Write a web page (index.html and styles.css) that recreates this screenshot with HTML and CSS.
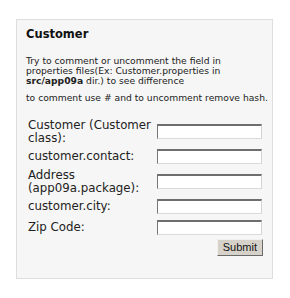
FILE: index.html
```html
<!DOCTYPE html>
<html lang="en">
<head>
    <meta charset="UTF-8">
    <title>Customer</title>
    <link rel="stylesheet" href="styles.css">
</head>
<body>
    <div class="box">
        <h2>Customer</h2>
        <p class="note">Try to comment or uncomment the field in<br>
        properties files(Ex: Customer.properties in<br>
        <b>src/app09a</b> dir.) to see difference</p>
        <p class="note second">to comment use # and to uncomment remove hash.</p>

        <form id="customerForm">
            <table class="fields">
                <tr>
                    <td class="label"><label for="name">Customer (Customer class):</label></td>
                    <td><input type="text" id="name" name="name"></td>
                </tr>
                <tr>
                    <td class="label"><label for="contact">customer.contact:</label></td>
                    <td><input type="text" id="contact" name="contact"></td>
                </tr>
                <tr>
                    <td class="label"><label for="address">Address (app09a.package):</label></td>
                    <td><input type="text" id="address" name="address"></td>
                </tr>
                <tr>
                    <td class="label"><label for="city">customer.city:</label></td>
                    <td><input type="text" id="city" name="city"></td>
                </tr>
                <tr>
                    <td class="label"><label for="zip">Zip Code:</label></td>
                    <td><input type="text" id="zip" name="zip"></td>
                </tr>
                <tr>
                    <td></td>
                    <td class="actions"><button type="submit">Submit</button></td>
                </tr>
            </table>
        </form>
    </div>
</body>
</html>
```

FILE: styles.css
```css
body {
    margin: 0;
    background: #fff;
    font-family: "DejaVu Sans", Verdana, sans-serif;
    color: #222;
}
.box {
    margin: 19px 0 0 16px;
    width: 246px;
    padding: 7px 0 19px 9px;
    background: #f6f6f6;
    border: 1px solid #dedede;
}
h2 {
    margin: 0;
    font-size: 11.5px;
    line-height: 14px;
    color: #111;
}
.note {
    margin: 15px 0 0 0;
    font-size: 9.2px;
    line-height: 10px;
}
.note.second {
    margin-top: 7px;
}
.fields {
    margin: 13px 0 0 -1px;
    border-spacing: 2px;
}
.fields td {
    padding: 1px;
    vertical-align: middle;
}
.label {
    width: 125px;
    font-size: 11.8px;
    line-height: 12.5px;
    color: #222;
}
input[type="text"] {
    display: block;
    box-sizing: border-box;
    width: 105px;
    height: 15px;
    margin: 1px 0;
    padding: 0 2px;
    background: #fff;
    border: 1px solid;
    border-top-width: 2px;
    border-color: #6e6e6e #d4d4d4 #dadada #777;
}
.actions {
    line-height: 0;
}
button {
    display: block;
    margin: -1px -1px 0 auto;
    height: 17px;
    padding: 0 5px;
    font-family: "Liberation Sans", Arial, sans-serif;
    font-size: 11px;
    line-height: 15px;
    color: #111;
    background: #d6d2ca;
    border: 1px solid;
    border-color: #f2f0ec #6a6a6a #6a6a6a #f2f0ec;
}
```
